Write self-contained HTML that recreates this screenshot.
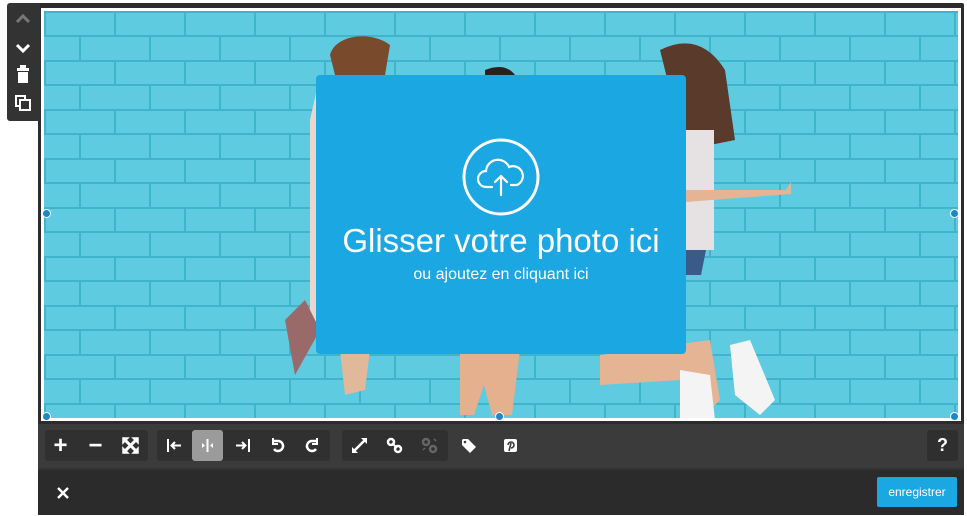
<!DOCTYPE html>
<html><head><meta charset="utf-8"><style>
*{margin:0;padding:0;box-sizing:border-box}
body{width:967px;height:516px;background:#fff;position:relative;overflow:hidden;font-family:"Liberation Sans",sans-serif}
.side{position:absolute;left:7px;top:3px;width:33px;height:118px;background:#333;border-radius:3px 0 0 3px}
.frame{position:absolute;left:38px;top:3px;width:926px;height:512px;background:#2c2c2c;border-radius:2px}
.img{position:absolute;left:41px;top:8px;width:920px;height:413px;background:#fff;padding:3px}
.bricks{position:absolute;left:3px;top:3px;right:3px;bottom:3px;overflow:hidden;background:#5cc8de}
.tb{position:absolute;left:38px;top:424px;width:926px;height:44px;background:#3b3b3b}
.bot{position:absolute;left:38px;top:468px;width:926px;height:47px;background:#2b2b2b;border-top:2px solid #333}
.grp{position:absolute;top:6px;height:31px;background:#303030;border-radius:3px}
.ic{position:absolute;top:0;width:31px;height:31px;color:#fff;font-weight:bold;text-align:center;line-height:31px;font-size:18px}
.panel{position:absolute;left:316px;top:75px;width:370px;height:279px;background:#1ba7e1;border-radius:4px;color:#fff;text-align:center}
.h{position:absolute;left:41px;width:9px;height:9px;border-radius:50%;background:#1b86c8;border:1px solid #fff}
</style></head><body>
<div class="frame"></div>
<div class="side">
<svg width="33" height="118" viewBox="0 0 33 118">
<path d="M10 19l6-6 6 6" stroke="#777" stroke-width="3" fill="none"/>
<path d="M10 42l6 6 6-6" stroke="#fff" stroke-width="3" fill="none"/>
<rect x="10" y="65" width="12" height="3" fill="#fff"/><rect x="13" y="62" width="6" height="3" fill="#fff"/><rect x="11" y="69" width="10" height="11" fill="#fff"/>
<rect x="9" y="93" width="9" height="10" fill="none" stroke="#fff" stroke-width="2"/><rect x="13" y="97" width="10" height="10" fill="#333" stroke="#fff" stroke-width="2"/>
</svg></div>
<div class="img"><div class="bricks">
<svg width="914" height="407" viewBox="0 0 914 407">
<defs><pattern id="b" width="140" height="49" patternUnits="userSpaceOnUse">
<rect width="140" height="49" fill="#5ecbe0"/>
<rect x="0" y="0" width="140" height="2" fill="#40b4cb"/><rect x="0" y="24" width="140" height="2" fill="#40b4cb"/>
<rect x="0" y="0" width="2" height="25" fill="#40b4cb"/><rect x="70" y="0" width="2" height="25" fill="#40b4cb"/>
<rect x="35" y="25" width="2" height="24" fill="#40b4cb"/><rect x="105" y="25" width="2" height="24" fill="#40b4cb"/>
</pattern></defs>
<rect width="914" height="407" fill="url(#b)"/>
<g transform="translate(-44,-11)">
<path d="M330 55c5-20 40-25 60-10l-5 30h-50z" fill="#7a4a2c"/>
<path d="M310 120l10-45h50l-10 250h-50z" fill="#e8d8cc"/>
<path d="M285 320l20-20 15 30-25 45z" fill="#9a6a6a"/>
<path d="M340 350l30 0 -5 40-20 5z" fill="#e2b89a"/>
<path d="M460 350h60l-8 65h-20l-8-30-10 30h-14z" fill="#e4b08e"/>
<path d="M485 70q20-8 30 5v5h-30z" fill="#2a2020"/>
<path d="M660 50q40-20 65 20l10 70-50 10z" fill="#5a3a2a"/>
<path d="M686 130h28v120h-28z" fill="#e6e2e4"/>
<path d="M686 250h20l-5 25h-15z" fill="#3a5a8a"/>
<path d="M686 190h100l5-8 0 12-105 8z" fill="#e4b494"/>
<path d="M600 355l110-15 10 60-20 20-20-40-80 5z" fill="#e4b494"/>
<path d="M730 345l20-5 25 60-15 15-25-20z" fill="#f4f4f4"/>
<path d="M680 370l30 5 5 45h-35z" fill="#f4f4f4"/>
</g>
</svg></div></div>
<div class="panel">
<svg style="position:absolute;left:145px;top:62px" width="80" height="80" viewBox="0 0 80 80">
<circle cx="40" cy="40" r="37" fill="none" stroke="#fff" stroke-width="3"/>
<path d="M31 50h-6a8 8 0 0 1 0-16a12 12 0 0 1 23-4a9 9 0 0 1 8 18h-6" fill="none" stroke="#fff" stroke-width="2.2" stroke-linecap="round"/>
<path d="M40 58v-18M34 45l6-6 6 6" fill="none" stroke="#fff" stroke-width="2.2" stroke-linecap="round"/>
</svg>
<div style="position:absolute;left:0;right:0;top:148px;font-size:33px;line-height:36px">Glisser votre photo ici</div>
<div style="position:absolute;left:0;right:0;top:190px;font-size:16px;line-height:20px">ou ajoutez en cliquant ici</div>
</div>
<div class="h" style="left:42px;top:209px"></div>
<div class="h" style="left:42px;top:412px"></div>
<div class="h" style="left:495px;top:412px"></div>
<div class="h" style="left:950px;top:209px"></div>
<div class="h" style="left:950px;top:412px"></div>
<div class="tb">
<div class="grp" style="left:7px;width:103px">
<div class="ic" style="left:0;font-size:24px">+</div><div class="ic" style="left:35px;font-size:24px">−</div>
<svg class="ic" style="left:70px" viewBox="0 0 31 31"><path d="M9 9l13 13M22 9L9 22" stroke="#fff" stroke-width="3"/><path d="M8 8h5l-5 5zM23 8h-5l5 5zM8 23h5l-5-5zM23 23h-5l5-5z" fill="#fff" stroke="#fff" stroke-width="1.5"/></svg>
</div>
<div class="grp" style="left:119px;width:173px">
<svg class="ic" style="left:2px" viewBox="0 0 31 31"><path d="M9 9v13M13 15.5h9M16 12l-3.5 3.5 3.5 3.5" stroke="#fff" stroke-width="2" fill="none"/></svg>
<div class="ic" style="left:35px;background:#9b9b9b;border-radius:3px"></div>
<svg class="ic" style="left:35px" viewBox="0 0 31 31"><path d="M15.5 9v13" stroke="#fff" stroke-width="2"/><path d="M10 13l3 2.5-3 2.5zM21 13l-3 2.5 3 2.5z" fill="#fff"/></svg>
<svg class="ic" style="left:70px" viewBox="0 0 31 31"><path d="M22 9v13M9 15.5h9M15 12l3.5 3.5L15 19" stroke="#fff" stroke-width="2" fill="none"/></svg>
<svg class="ic" style="left:105px" viewBox="0 0 31 31"><path d="M12 11h4a5 5 0 1 1-4 8" stroke="#fff" stroke-width="2.5" fill="none"/><path d="M11 8v6h5" fill="none" stroke="#fff" stroke-width="2"/></svg>
<svg class="ic" style="left:140px" viewBox="0 0 31 31"><path d="M19 11h-4a5 5 0 1 0 4 8" stroke="#fff" stroke-width="2.5" fill="none"/><path d="M20 8v6h-5" fill="none" stroke="#fff" stroke-width="2"/></svg>
</div>
<div class="grp" style="left:304px;width:106px">
<svg class="ic" style="left:2px" viewBox="0 0 31 31"><path d="M10 21l11-11" stroke="#fff" stroke-width="2.5"/><path d="M8 23v-6l6 6zM23 8v6l-6-6z" fill="#fff"/></svg>
<svg class="ic" style="left:37px" viewBox="0 0 31 31"><circle cx="12" cy="12" r="3" fill="none" stroke="#fff" stroke-width="2.5"/><circle cx="19" cy="19" r="3" fill="none" stroke="#fff" stroke-width="2.5"/><path d="M13 13l5 5" stroke="#fff" stroke-width="2"/></svg>
<svg class="ic" style="left:72px" viewBox="0 0 31 31"><circle cx="12" cy="12" r="3" fill="none" stroke="#666" stroke-width="2.5"/><circle cx="19" cy="19" r="3" fill="none" stroke="#666" stroke-width="2.5"/><path d="M9 20l2-2M20 9l2 2" stroke="#666" stroke-width="1.5"/></svg>
</div>
<svg class="ic" style="left:415px;top:6px" viewBox="0 0 31 31"><path d="M9 10v5l8 8 6-6-8-8h-5z" fill="#fff"/><circle cx="12" cy="12" r="1.3" fill="#3b3b3b"/></svg>
<svg class="ic" style="left:457px;top:6px" viewBox="0 0 31 31"><rect x="9" y="9" width="13" height="13" rx="2" fill="#fff"/><path d="M14 21l2-8M13 15a3 3 0 1 1 3 3" stroke="#3b3b3b" stroke-width="1.6" fill="none"/></svg>
<div class="grp" style="left:889px;width:31px;background:#2f2f2f"><div class="ic" style="left:0;font-size:18px">?</div></div>
</div>
<div class="bot">
<svg style="position:absolute;left:18px;top:16px" width="14" height="14" viewBox="0 0 14 14"><path d="M2 2l10 10M12 2L2 12" stroke="#fff" stroke-width="2.4"/></svg>
<div style="position:absolute;left:839px;top:7px;width:80px;height:30px;background:#1ba7e1;border-radius:2px;color:#fff;font-size:12px;line-height:30px;text-align:center">enregistrer</div>
</div>
</body></html>
